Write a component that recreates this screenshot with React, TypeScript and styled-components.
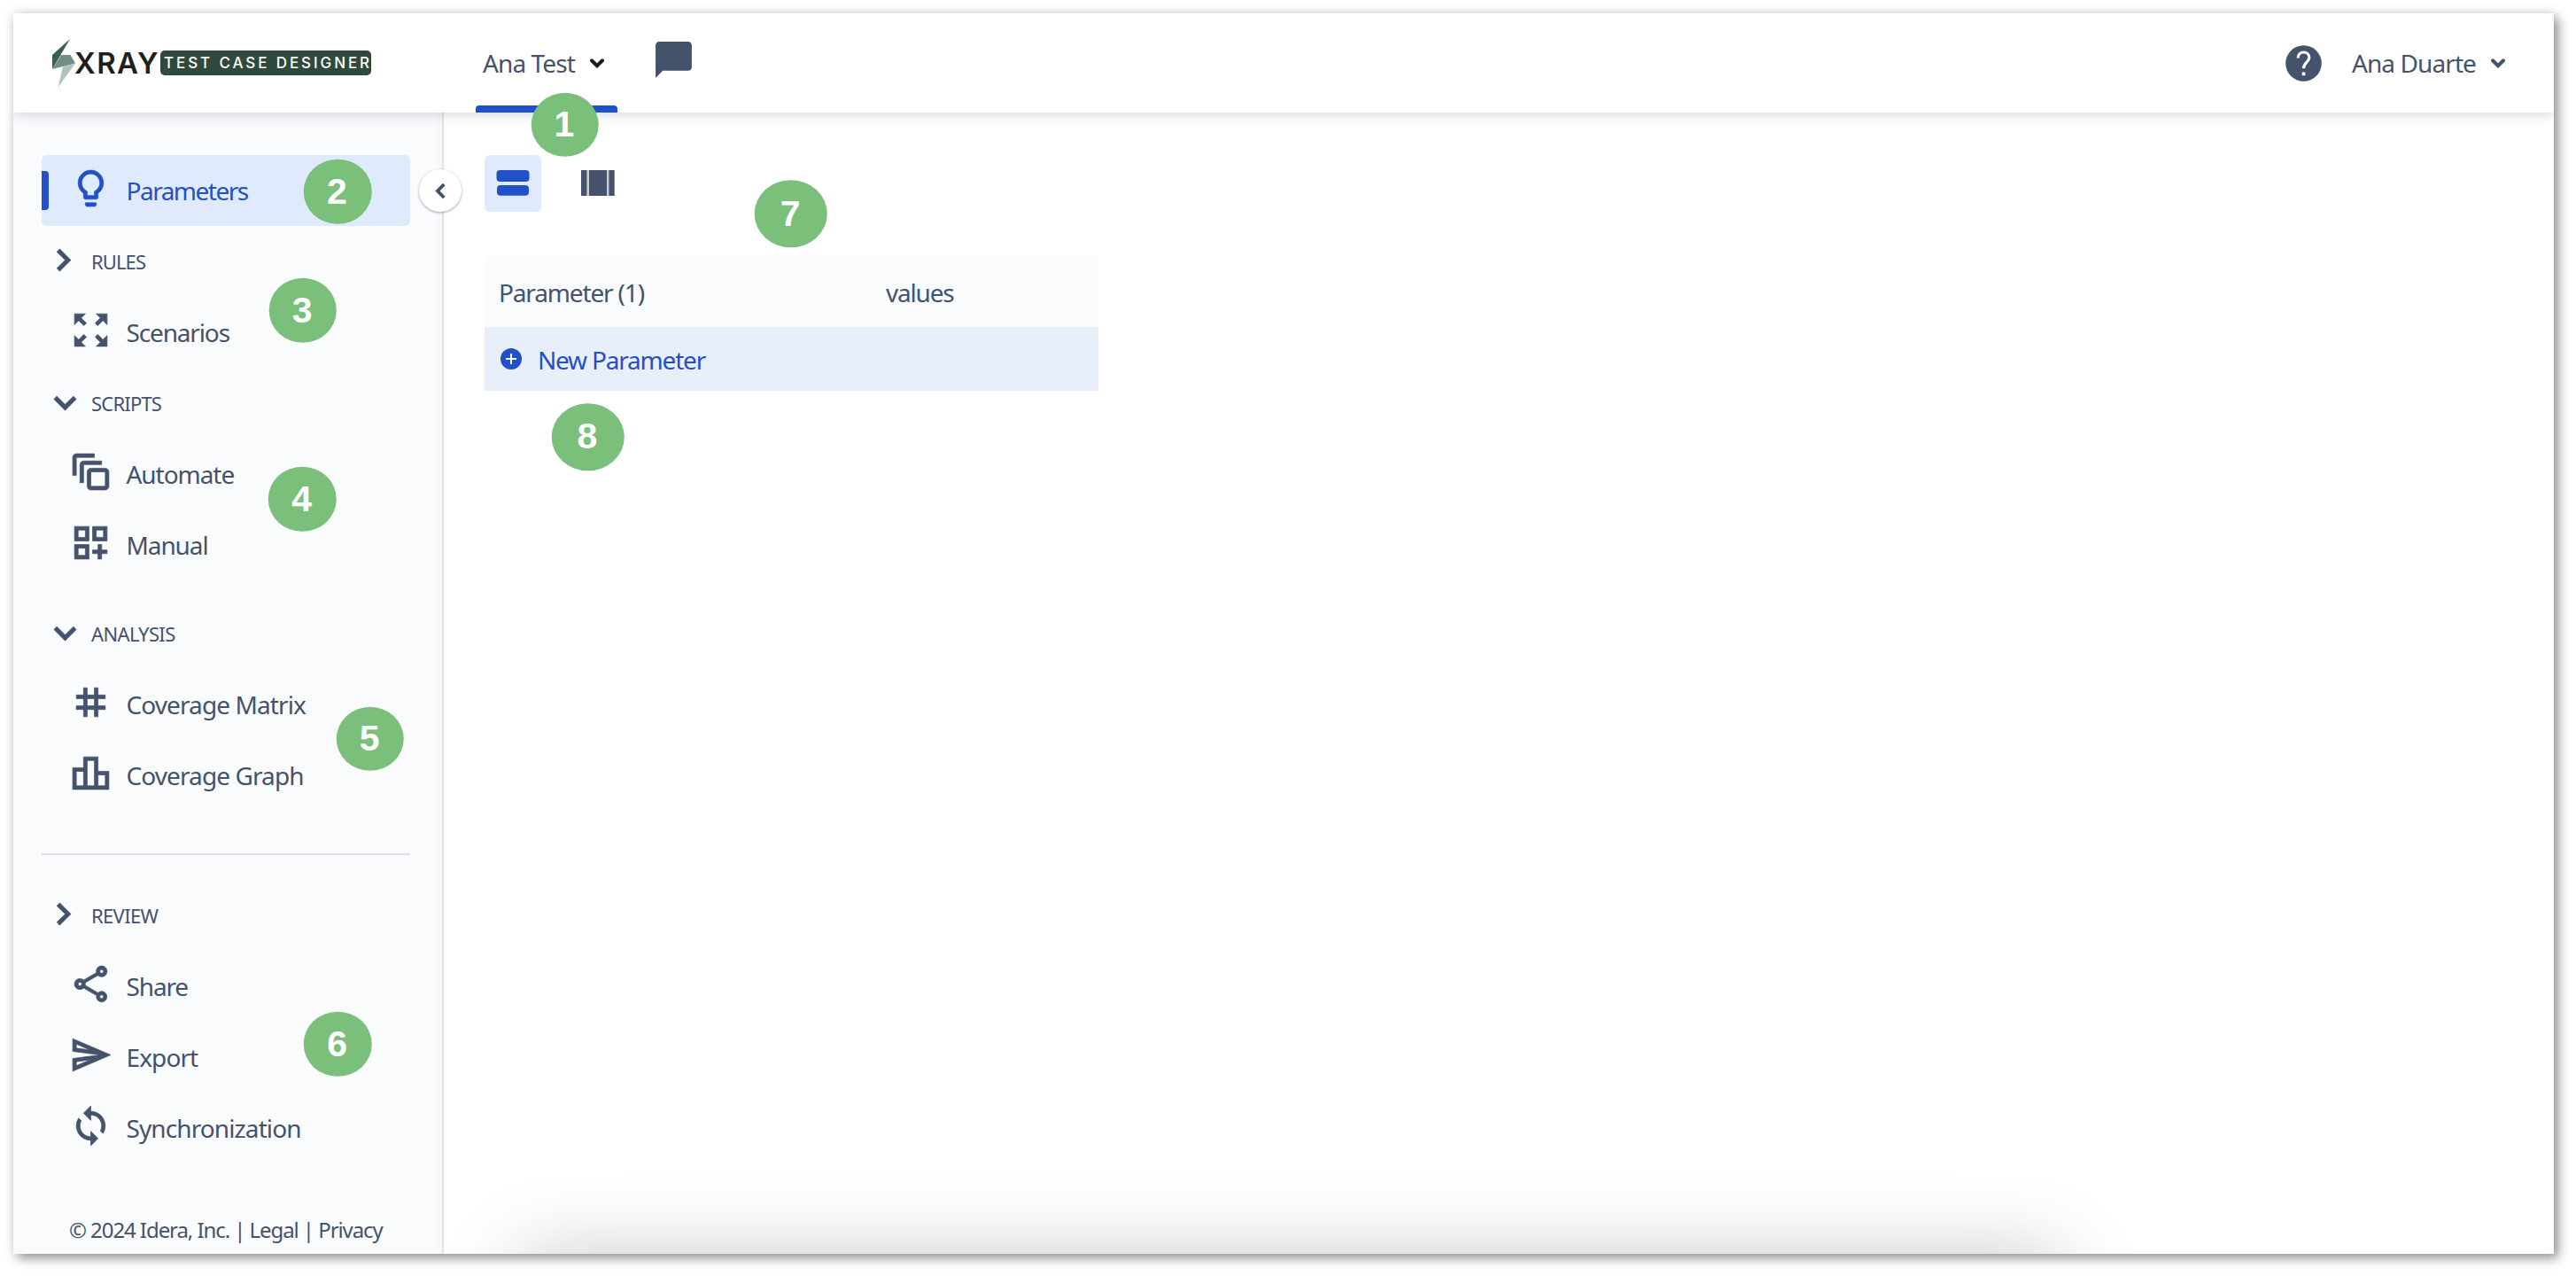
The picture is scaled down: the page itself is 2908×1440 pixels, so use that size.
import React from 'react';
import styled, { createGlobalStyle } from 'styled-components';
import {
  MdChatBubble,
  MdChevronRight,
  MdExpandMore,
  MdOutlineAutoAwesomeMotion,
  MdOutlineDashboardCustomize,
  MdOutlineLeaderboard,
  MdOutlineLightbulb,
  MdOutlineSend,
  MdOutlineShare,
  MdSync,
  MdTag,
  MdZoomOutMap,
} from 'react-icons/md';

const slate = '#44526c';
const blue = '#2250c8';

const GlobalStyle = createGlobalStyle`
  * { box-sizing: border-box; }
  body {
    margin: 0;
    background: #fff;
    color: ${slate};
    font-family: "Noto Sans", "Open Sans", sans-serif;
    font-size: 28px;
  }
  svg { display: block; flex: none; }
`;

const Page = styled.div`
  position: relative;
  width: 2908px;
  height: 1440px;
  padding: 15px 25px 25px 15px;
  overflow: hidden;
`;

const Window = styled.div`
  display: flex;
  flex-direction: column;
  height: 1400px;
  background: #fff;
  box-shadow: 5px 5px 12px rgba(0, 0, 0, 0.4), 0 0 14px rgba(0, 0, 0, 0.1);
`;

const Header = styled.header`
  position: relative;
  z-index: 2;
  display: flex;
  align-items: center;
  flex: none;
  height: 112px;
  padding: 0 55px 0 44px;
  background: #fff;
  box-shadow: 0 1px 14px rgba(30, 45, 70, 0.22);
  clip-path: inset(0 0 -24px 0);
`;

const Brand = styled.div`
  display: flex;
  align-items: center;
  width: 478px;
`;

const BrandName = styled.span`
  width: 97px;
  margin-left: -1px;
  font-family: Inter, sans-serif;
  font-size: 33px;
  line-height: 28px;
  font-weight: 600;
  letter-spacing: 1.4px;
  color: #1f1f1c;
  white-space: nowrap;
`;

const BrandTag = styled.span`
  width: 238px;
  height: 28px;
  padding-left: 4px;
  border-radius: 5px;
  background: #2f4a3c;
  color: #fff;
  font-family: Inter, sans-serif;
  font-size: 17px;
  line-height: 28px;
  font-weight: 500;
  letter-spacing: 2.9px;
  white-space: nowrap;
`;

const Tab = styled.div`
  display: flex;
  flex-direction: column;
  width: 160px;
  height: 112px;
  &::after {
    content: '';
    height: 8px;
    border-radius: 4px 4px 0 0;
    background: ${blue};
  }
`;

const TabLabel = styled.div`
  display: flex;
  align-items: center;
  flex: 1;
  padding: 8px 0 0 8px;
`;

const Label = styled.span<{ $spacing?: number }>`
  letter-spacing: ${(p) => p.$spacing ?? -0.9}px;
  white-space: nowrap;
`;

const Comment = styled.div`
  margin: -8px auto 0 39px;
`;

const Account = styled.div`
  display: flex;
  align-items: center;
`;

const HelpIcon = styled.svg`
  margin-right: 34px;
`;

const Caret = styled.svg<{ $gap: number }>`
  margin-left: ${(p) => p.$gap}px;
`;

const Body = styled.div`
  display: flex;
  flex: 1;
  min-height: 0;
`;

const Sidebar = styled.nav`
  position: relative;
  z-index: 1;
  display: flex;
  flex-direction: column;
  width: 486px;
  padding: 48px 36px 0 32px;
  border-right: 2px solid #e1e3e8;
  background: linear-gradient(90deg, #fafbfd 98.6%, #f5f6f8 100%);
`;

const CollapseButton = styled.button`
  position: absolute;
  top: 64px;
  right: -22px;
  display: flex;
  align-items: center;
  justify-content: center;
  width: 48px;
  height: 48px;
  padding: 0;
  border: 0;
  border-radius: 50%;
  background: #fff;
  box-shadow: 0 1px 3px rgba(40, 50, 75, 0.45);
`;

const Item = styled.a<{ $active?: boolean }>`
  display: flex;
  align-items: center;
  height: 80px;
  flex: none;
  border-radius: 6px;
  color: ${(p) => (p.$active ? blue : slate)};
  background: ${(p) => (p.$active ? '#dfeafd' : 'transparent')};
  &::before {
    content: '';
    width: 8px;
    height: 44px;
    border-radius: 0 4px 4px 0;
    background: ${(p) => (p.$active ? blue : 'transparent')};
  }
  svg {
    margin: -5px 15.5px 0 23px;
    stroke-width: 0.35;
  }
  path[fill='none'] { stroke: none; }
`;

const Section = styled.div<{ $open?: boolean }>`
  display: flex;
  align-items: center;
  height: 80px;
  flex: none;
  font-size: 22px;
  padding-left: ${(p) => (p.$open ? 1.5 : 0)}px;
  svg {
    margin-top: ${(p) => (p.$open ? -1 : -4)}px;
    margin-right: ${(p) => (p.$open ? 5.5 : 7)}px;
    stroke-width: 0.5;
  }
  path[fill='none'] { stroke: none; }
`;

const Group = styled.div<{ $after?: number }>`
  margin-bottom: ${(p) => p.$after ?? 0}px;
`;

const Divider = styled.hr`
  width: 416px;
  height: 2px;
  margin: 0 0 28px;
  border: 0;
  background: #dfe1e5;
`;

const Footer = styled.footer`
  margin: 58px 0 0 31px;
  font-size: 24px;
  line-height: 33px;
  white-space: nowrap;
`;

const Main = styled.main`
  position: relative;
  flex: 1;
  padding: 48px 46px 0;
  overflow: hidden;
  &::after {
    content: '';
    position: absolute;
    left: 84px;
    right: 555px;
    top: 1290px;
    height: 300px;
    border-radius: 20px;
    box-shadow: 0 0 90px rgba(0, 0, 0, 0.22);
  }
`;

const Views = styled.div`
  display: flex;
  gap: 32px;
  margin-bottom: 50px;
`;

const ViewButton = styled.button<{ $active?: boolean }>`
  display: flex;
  width: 64px;
  height: 64px;
  padding: 0;
  border: 0;
  border-radius: 6px;
  background: ${(p) => (p.$active ? '#dfeafd' : 'transparent')};
`;

const Table = styled.div`
  width: 693px;
`;

const TableHead = styled.div`
  display: grid;
  grid-template-columns: 437px 1fr;
  align-items: center;
  height: 80px;
  padding: 2px 16px 0;
  background: #fafbfd;
`;

const NewRow = styled.div`
  display: flex;
  align-items: center;
  gap: 18px;
  height: 72px;
  padding: 2px 18px 0;
  color: ${blue};
  background: #e8eefa;
  svg { margin-top: -3px; }
`;

const Marker = styled.span<{ $x: number; $y: number; $large?: boolean }>`
  position: absolute;
  z-index: 2;
  left: ${(p) => p.$x}px;
  top: ${(p) => p.$y}px;
  display: flex;
  align-items: center;
  justify-content: center;
  width: ${(p) => (p.$large ? 82.5 : 76.5)}px;
  height: ${(p) => (p.$large ? 75.5 : 72.5)}px;
  padding-right: 1px;
  transform: translate(-50%, -50%);
  border-radius: 50%;
  background: #7bc07a;
  color: #fff;
  font: bold 41px "Liberation Sans", Arial, sans-serif;
`;

const markers = [
  { n: 1, x: 637.5, y: 140.5 },
  { n: 2, x: 381, y: 216 },
  { n: 3, x: 341.7, y: 350 },
  { n: 4, x: 341.2, y: 563.2 },
  { n: 5, x: 417.7, y: 833.7 },
  { n: 6, x: 381.2, y: 1178.3 },
  { n: 7, x: 892.7, y: 241.3, large: true },
  { n: 8, x: 663.5, y: 493, large: true },
];

const ICON = 49;

function DownCaret({ color, gap }: { color: string; gap: number }) {
  return (
    <Caret $gap={gap} width="16" height="11" viewBox="0 0 16 11">
      <path d="M2 2.3 8 8.2 14 2.3" fill="none" stroke={color} strokeWidth="4" strokeLinecap="round" />
    </Caret>
  );
}

function Bolt() {
  return (
    <svg width="26" height="55" viewBox="0 0 26 55">
      <path d="M0 18 20 0 0 34z" fill="#39604f" />
      <path d="M10 18h10.500l5.500 9.500L0 34z" fill="#728f84" />
      <path d="M12 31 26 27.500 6.500 54.500z" fill="#b0c3bb" />
    </svg>
  );
}

export default function App() {
  return (
    <Page>
      <GlobalStyle />
      <Window>
        <Header>
          <Brand>
            <Bolt />
            <BrandName>XRAY</BrandName>
            <BrandTag>TEST CASE DESIGNER</BrandTag>
          </Brand>
          <Tab>
            <TabLabel>
              <Label>Ana Test</Label>
              <DownCaret color="#1b1b1b" gap={17} />
            </TabLabel>
          </Tab>
          <Comment><MdChatBubble size={ICON} /></Comment>
          <Account>
            <HelpIcon width="41" height="41" viewBox="0 0 41 41">
              <circle cx="20.500" cy="20.500" r="20.300" fill={slate} />
              <path d="M14.200 14.500c0-4.200 2.800-6.500 6.300-6.500s6.300 2.400 6.300 6c0 5.300-6.300 5.800-6.300 12.200" fill="none" stroke="#fff" strokeWidth="3.200" />
              <rect x="18.700" y="30.500" width="3.700" height="3.700" fill="#fff" />
            </HelpIcon>
            <Label>Ana Duarte</Label>
            <DownCaret color={slate} gap={17} />
          </Account>
        </Header>
        <Body>
          <Sidebar>
            <Item $active><MdOutlineLightbulb size={ICON} /><Label $spacing={-1.5}>Parameters</Label></Item>
            <Section><MdChevronRight size={ICON} /><Label>RULES</Label></Section>
            <Item><MdZoomOutMap size={ICON} /><Label $spacing={-1.15}>Scenarios</Label></Item>
            <Group $after={20}>
              <Section $open><MdExpandMore size={ICON} /><Label $spacing={-0.8}>SCRIPTS</Label></Section>
              <Item><MdOutlineAutoAwesomeMotion size={ICON} /><Label $spacing={-1.05}>Automate</Label></Item>
              <Item><MdOutlineDashboardCustomize size={ICON} /><Label $spacing={-1.1}>Manual</Label></Item>
            </Group>
            <Group $after={48}>
              <Section $open><MdExpandMore size={ICON} /><Label $spacing={-0.65}>ANALYSIS</Label></Section>
              <Item><MdTag size={ICON} /><Label>Coverage Matrix</Label></Item>
              <Item><MdOutlineLeaderboard size={ICON} /><Label>Coverage Graph</Label></Item>
            </Group>
            <Divider />
            <Section><MdChevronRight size={ICON} /><Label $spacing={-0.65}>REVIEW</Label></Section>
            <Item><MdOutlineShare size={ICON} /><Label $spacing={-1.15}>Share</Label></Item>
            <Item><MdOutlineSend size={ICON} /><Label>Export</Label></Item>
            <Item><MdSync size={ICON} /><Label>Synchronization</Label></Item>
            <Footer><Label $spacing={-1.07}>© 2024 Idera, Inc. | Legal | Privacy</Label></Footer>
            <CollapseButton>
              <svg width="12" height="19" viewBox="0 0 12 19">
                <path d="M10.300 2 3 9.500l7.300 7.500" fill="none" stroke={slate} strokeWidth="3.800" />
              </svg>
            </CollapseButton>
          </Sidebar>
          <Main>
            <Views>
              <ViewButton $active>
                <svg width="64" height="64" viewBox="0 0 64 64">
                  <rect x="13.500" y="17" width="37" height="13" rx="4" fill={blue} />
                  <rect x="14" y="34" width="36" height="11.700" rx="4" fill={blue} />
                </svg>
              </ViewButton>
              <ViewButton>
                <svg width="64" height="64" viewBox="0 0 64 64">
                  <path d="M13 17h6.700v29H13zM22 17h20v29H22zM44.200 17h6.500v29h-6.500z" fill={slate} />
                  <path d="M19.700 17H22v29h-2.300zM42 17h2.200v29H42z" fill="#c9cdd6" />
                </svg>
              </ViewButton>
            </Views>
            <Table>
              <TableHead>
                <Label $spacing={-1.15}>Parameter (1)</Label>
                <Label $spacing={-1.2}>values</Label>
              </TableHead>
              <NewRow>
                <svg width="24" height="24" viewBox="0 0 24 24">
                  <circle cx="12" cy="12" r="12" fill={blue} />
                  <path d="M12 6v12M6 12h12" stroke="#fff" strokeWidth="2" />
                </svg>
                <Label $spacing={-1.2}>New Parameter</Label>
              </NewRow>
            </Table>
          </Main>
        </Body>
      </Window>
      {markers.map((m) => (
        <Marker key={m.n} $x={m.x} $y={m.y} $large={m.large}>{m.n}</Marker>
      ))}
    </Page>
  );
}
